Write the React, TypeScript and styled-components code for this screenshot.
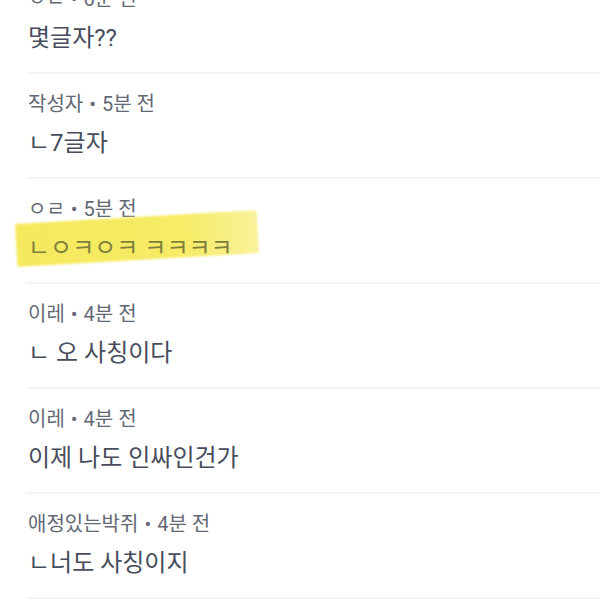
import React from "react";
import styled, { createGlobalStyle } from "styled-components";

const Global = createGlobalStyle`
  html, body { margin: 0; padding: 0; background: #ffffff; }
  body { overflow: hidden; font-family: Roboto, "Noto Sans CJK KR", sans-serif; }
`;

const Page = styled.div`
  width: 600px;
  height: 600px;
  overflow: hidden;
  background: #ffffff;
`;

const List = styled.ul`
  list-style: none;
  margin: -31px 0 0 0;
  padding: 0 0 0 27px;
`;

const Item = styled.li`
  display: flex;
  flex-direction: column;
  gap: 10px;
  padding: 17px 0 18px 1px;
  border-bottom: 2px solid #f4f4f6;
`;

const Meta = styled.div`
  font-size: 20px;
  line-height: 26px;
  color: #636875;
  white-space: nowrap;
`;

const Dot = styled.span`
  margin: 0 6px 0 6px;
`;

const Body = styled.div<{ $marked?: boolean }>`
  position: relative;
  font-size: 24px;
  line-height: 32px;
  color: ${(p) => (p.$marked ? "#7f7f3c" : "#474d5c")};
  white-space: nowrap;
`;

const BodyText = styled.span`
  position: relative;
`;

const Marker = styled.span`
  position: absolute;
  left: -12px;
  top: -15px;
  width: 242px;
  height: 43px;
  background: linear-gradient(90deg, #f5ea5e 0%, #f6ec66 70%, #f9f29a 100%);
  transform: rotate(-3.3deg);
  filter: blur(0.8px);
  border-radius: 2px;
`;

type C = { author: string; time: string; text: string; marked?: boolean };

const comments: C[] = [
  { author: "ㅇㄹ", time: "6분 전", text: "몇글자??" },
  { author: "작성자", time: "5분 전", text: "ㄴ7글자" },
  { author: "ㅇㄹ", time: "5분 전", text: "ㄴㅇㅋㅇㅋ ㅋㅋㅋㅋ", marked: true },
  { author: "이레", time: "4분 전", text: "ㄴ 오 사칭이다" },
  { author: "이레", time: "4분 전", text: "이제 나도 인싸인건가" },
  { author: "애정있는박쥐", time: "4분 전", text: "ㄴ너도 사칭이지" },
];

export default function App() {
  return (
    <Page>
      <Global />
      <List>
        {comments.map((c, i) => (
          <Item key={i}>
            <Meta>
              {c.author}
              <Dot>•</Dot>
              {c.time}
            </Meta>
            <Body $marked={c.marked}>
              {c.marked && <Marker />}
              <BodyText>{c.text}</BodyText>
            </Body>
          </Item>
        ))}
      </List>
    </Page>
  );
}
